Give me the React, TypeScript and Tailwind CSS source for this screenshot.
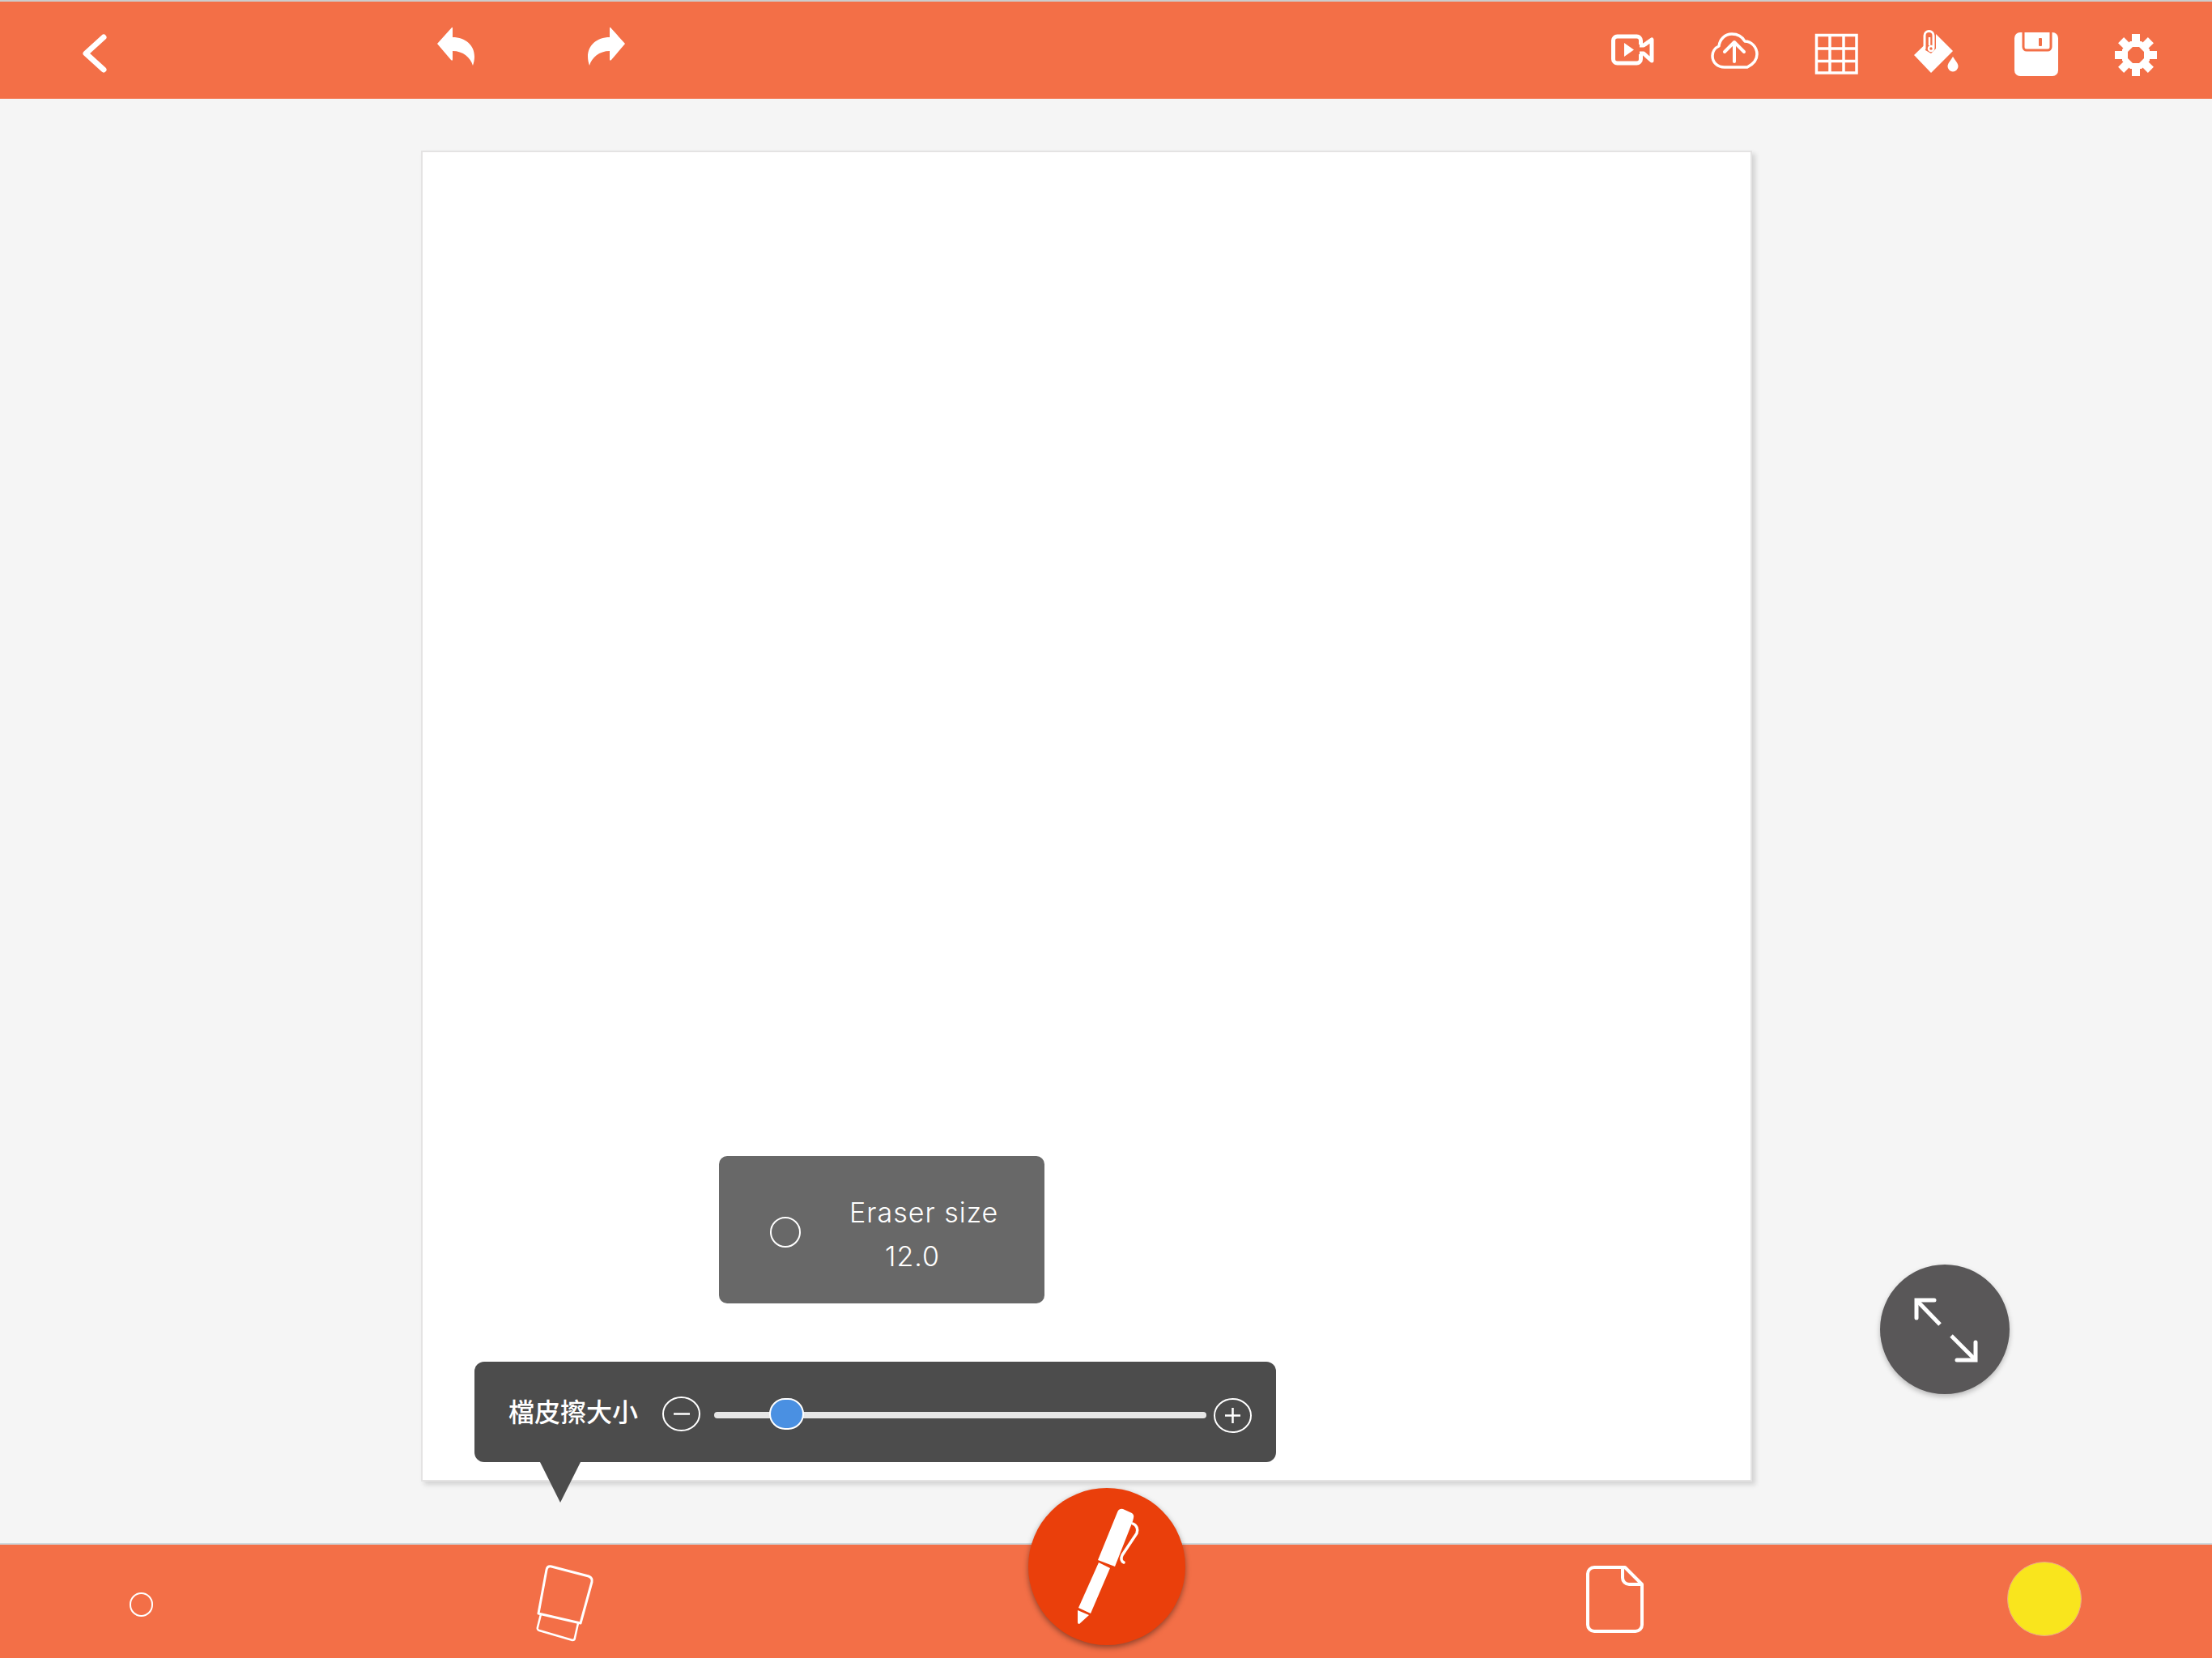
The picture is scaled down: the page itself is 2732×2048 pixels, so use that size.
// App.tsx
import React from 'react';

const BackIcon = () => (
  <svg width="35" height="70" viewBox="100 30 35 70" fill="none">
    <path d="M128 46 L106 66 L128 86" stroke="#fff" strokeWidth="7" strokeLinecap="round" strokeLinejoin="round" />
  </svg>
);

const UndoIcon = () => (
  <svg width="54" height="70" viewBox="536 30 54 70" fill="#fff">
    <path d="M540 54 L558 34 Q559 33 559 35 V46 C575 46 586 56 586 70 C586 74 585 78 584 81 C581 71 572 63 559 63 V73 Q559 76 557 74 Z" />
  </svg>
);

const RedoIcon = () => (
  <svg width="54" height="70" viewBox="722 30 54 70" fill="#fff">
    <path d="M772 54 L754 34 Q753 33 753 35 V46 C737 46 726 56 726 70 C726 74 727 78 728 81 C731 71 740 63 753 63 V73 Q753 76 755 74 Z" />
  </svg>
);

const VideoIcon = () => (
  <svg width="58" height="70" viewBox="1988 30 58 70" fill="none" stroke="#fff" strokeWidth="5">
    <path d="M2026.5 55 V50 a5 5 0 0 0 -5 -5 H1997.5 a5 5 0 0 0 -5 5 V73 a5 5 0 0 0 5 5 H2021.5 a5 5 0 0 0 5 -5 V67" />
    <path d="M2025 56 H2030 L2040 49 V75 L2030 66 H2025" strokeLinejoin="round" />
    <path d="M2006 53 L2018 61.5 L2006 70 Z" fill="#fff" stroke="none" />
  </svg>
);

const CloudIcon = () => (
  <svg width="66" height="70" viewBox="2110 30 66 70" fill="none" stroke="#fff" strokeWidth="3.5" strokeLinecap="round" strokeLinejoin="round">
    <path d="M2130 83 H2158 C2166 79 2170 74 2170 67 C2170 58 2163 51 2155 51 C2151 44 2145 42 2139 42 C2130 42 2124 49 2123 57 C2118 59 2115 64 2115 69 C2115 77 2121 83 2130 83 Z" />
    <path d="M2142 76 V52 M2130 64 L2142 52 L2154 64" strokeWidth="4" />
  </svg>
);

const GridIcon = () => (
  <svg width="60" height="70" viewBox="2238 30 60 70" fill="none" stroke="#fff" strokeWidth="3.5">
    <path d="M2243.5 43.5 H2293 V90 H2243.5 Z M2260 43.5 V90 M2277 43.5 V90 M2243.5 60 H2293 M2243.5 75.5 H2293" />
  </svg>
);

const BucketIcon = () => (
  <svg width="62" height="70" viewBox="2360 30 62 70" fill="none">
    <path d="M2364 68 L2385 90 L2412 63 L2391 42 Z" fill="#fff" />
    <path d="M2372 40 H2391 V60 L2385 66 L2378 62 L2374 52 Z" fill="#F36F47" />
    <path d="M2377 60 V44 a5.5 5.5 0 0 1 11 0 V59" stroke="#fff" strokeWidth="3" strokeLinecap="round" />
    <path d="M2383 46 V56" stroke="#fff" strokeWidth="2.5" />
    <circle cx="2385" cy="60" r="3" stroke="#fff" strokeWidth="2.5" />
    <path d="M2412 70 C2409 75 2405.5 78 2405.5 82 a6.5 6.5 0 0 0 13 0 C2418.5 78 2415 75 2412 70 Z" fill="#fff" />
  </svg>
);

const SaveIcon = () => (
  <svg width="58" height="70" viewBox="2486 30 58 70" fill="none">
    <rect x="2488" y="40" width="54" height="54" rx="7" fill="#fff" />
    <path d="M2499 40 V58 a4 4 0 0 0 4 4 H2529 a4 4 0 0 0 4 -4 V40" stroke="#F36F47" strokeWidth="3" />
    <rect x="2518" y="47" width="4" height="10" rx="1" fill="#F36F47" />
  </svg>
);

const GearIcon = () => (
  <svg width="60" height="70" viewBox="2608 30 60 70" fill="#fff">
    {[0, 45, 90, 135, 180, 225, 270, 315].map((deg) => (
      <rect key={deg} x="2633" y="42" width="10" height="16" transform={`rotate(${deg} 2638 68)`} />
    ))}
    <polygon points="2631,51 2645,51 2655,61 2655,75 2645,85 2631,85 2621,75 2621,61" />
    <polygon points="2634,58 2642,58 2648,64 2648,72 2642,78 2634,78 2628,72 2628,64" fill="#F36F47" />
  </svg>
);

const EraserIcon = () => (
  <svg width="80" height="104" viewBox="660 1926 80 104" fill="none" stroke="#fff" strokeLinejoin="round">
    <path d="M665 1993 L675 1939 Q676 1934 681 1935 L727 1947 Q732 1949 731 1954 L717 2005 Z" strokeWidth="3" />
    <path d="M668 1994 L664 2010 Q663 2013 666 2014 L707 2026 Q710 2026 710 2023 L714 2005" strokeWidth="2.5" />
  </svg>
);

const DocIcon = () => (
  <svg width="78" height="104" viewBox="1956 1926 78 104" fill="none" stroke="#fff" strokeWidth="4" strokeLinejoin="round">
    <path d="M2007 1936 H1969 a8 8 0 0 0 -8 8 V2007 a8 8 0 0 0 8 8 H2020 a8 8 0 0 0 8 -8 V1957 Z" />
    <path d="M2004 1936 V1949 a8 8 0 0 0 8 8 H2028" />
  </svg>
);

const PenIcon = () => (
  <svg width="194" height="194" viewBox="1270 1838 194 194" fill="#fff">
    <path d="M1380 1868 Q1382 1863 1387 1864 L1398 1869 Q1401 1871 1400 1875 L1399 1879 L1377 1935 L1356 1927 Z" />
    <path d="M1357 1930 L1371 1937 L1347 1993 L1332 1986 Z" />
    <path d="M1331 1989 L1345 1995 L1333 2006 Q1331 2006 1331 2004 Z" />
    <path d="M1399 1882 C1404 1884 1406 1889 1404 1894 L1386 1921 C1384 1925 1385 1929 1388 1930" fill="none" stroke="#fff" strokeWidth="3.5" strokeLinecap="round" />
  </svg>
);

const ExpandIcon = () => (
  <svg width="160" height="160" viewBox="2322 1562 160 160" fill="none" stroke="#fff" strokeWidth="5">
    <path d="M2396 1636 L2367 1606" />
    <path d="M2389 1606 H2367 V1628" strokeLinecap="round" />
    <path d="M2410 1650 L2440 1680" />
    <path d="M2417 1680 H2440 V1658" strokeLinecap="round" />
  </svg>
);

const MinusCircle = () => (
  <svg width="47" height="43" viewBox="0 0 47 43" fill="none" stroke="#fff" strokeWidth="2" className="mt-[4px] shrink-0">
    <ellipse cx="23.5" cy="21.5" rx="22.5" ry="20.5" />
    <path d="M14 21.5 H34" strokeWidth="2.5" />
  </svg>
);

const PlusCircle = () => (
  <svg width="47" height="43" viewBox="0 0 47 43" fill="none" stroke="#fff" strokeWidth="2" className="mt-[8px] shrink-0">
    <ellipse cx="23.5" cy="21.5" rx="22.5" ry="20.5" />
    <path d="M14 21.5 H33 M23.5 12 V31" strokeWidth="2.5" />
  </svg>
);

const App: React.FC = () => {
  return (
    <div className="flex h-[2048px] w-[2732px] flex-col overflow-hidden bg-[#f5f5f5]">
      {/* top toolbar */}
      <div className="flex h-[122px] shrink-0 items-start border-t-2 border-[#cccccc] bg-[#F36F47] pl-[100px] pt-[28px]">
        <BackIcon />
        <div className="ml-[401px]"><UndoIcon /></div>
        <div className="ml-[132px]"><RedoIcon /></div>
        <div className="ml-[1212px]"><VideoIcon /></div>
        <div className="ml-[64px]"><CloudIcon /></div>
        <div className="ml-[62px]"><GridIcon /></div>
        <div className="ml-[62px]"><BucketIcon /></div>
        <div className="ml-[64px]"><SaveIcon /></div>
        <div className="ml-[64px]"><GearIcon /></div>
      </div>

      {/* canvas area */}
      <div className="relative flex-1 pl-[520px] pt-[64px]">
        <div className="relative h-[1644px] w-[1644px] border-2 border-[#e4e3e3] bg-white shadow-[4px_4px_6px_rgba(0,0,0,0.14)]">
          <div className="absolute left-[366px] top-[1240px] flex h-[182px] w-[402px] items-center rounded-[10px] bg-[#686868] pl-[63px] text-white">
            <div className="mt-[6px] h-[38px] w-[38px] shrink-0 rounded-full border-2 border-white" />
            <div className="ml-[60px] flex flex-col pt-[12px] text-[34px] font-light leading-[54px] tracking-[1px] [font-family:Inter,sans-serif]">
              <span className="whitespace-nowrap">Eraser size</span>
              <span className="ml-[44px]">12.0</span>
            </div>
          </div>

          <div className="absolute left-[64px] top-[1494px] flex h-[124px] w-[990px] items-center rounded-[12px] bg-[#4c4c4c] pl-[42px]">
            <span className="mb-[4px] w-[160px] shrink-0 whitespace-nowrap text-[32px] font-medium text-white [font-family:'Noto_Sans_CJK_TC',sans-serif]">
              檔皮擦大小
            </span>
            <div className="ml-[30px]"><MinusCircle /></div>
            <div className="relative ml-[17px] mt-[8px] h-[8px] w-[608px] shrink-0 rounded-full bg-[#e6e6e6]">
              <div className="absolute left-[68px] top-[-17px] h-[39px] w-[43px] rounded-full border-2 border-white bg-[#4a90e2]" />
            </div>
            <div className="ml-[9px]"><PlusCircle /></div>
            <div className="absolute left-[81px] top-[124px] h-0 w-0 border-x-[25px] border-t-[50px] border-x-transparent border-t-[#4c4c4c]" />
          </div>
        </div>

        <div className="absolute left-[2322px] top-[1440px] h-[160px] w-[160px] rounded-full bg-[#595758] shadow-[0_3px_6px_rgba(0,0,0,0.25)]">
          <ExpandIcon />
        </div>
      </div>

      {/* bottom toolbar */}
      <div className="relative flex h-[142px] shrink-0 items-start border-t-2 border-[#cfd8dc] bg-[#F36F47] pl-[160px] pt-[18px]">
        <div className="mt-[41px] h-[30px] w-[29px] shrink-0 rounded-full border-2 border-white" />
        <div className="ml-[471px]"><EraserIcon /></div>
        <div className="ml-[1216px]"><DocIcon /></div>
        <div className="ml-[445px] mt-[3px] h-[92px] w-[92px] rounded-full border border-[#eba58c] bg-[#F9E51D]" />
        <div className="absolute left-[1270px] top-[-70px] h-[194px] w-[194px] rounded-full bg-[#EA3F0B] shadow-[0_3px_7px_rgba(0,0,0,0.4)]">
          <PenIcon />
        </div>
      </div>
    </div>
  );
};

export default App;
